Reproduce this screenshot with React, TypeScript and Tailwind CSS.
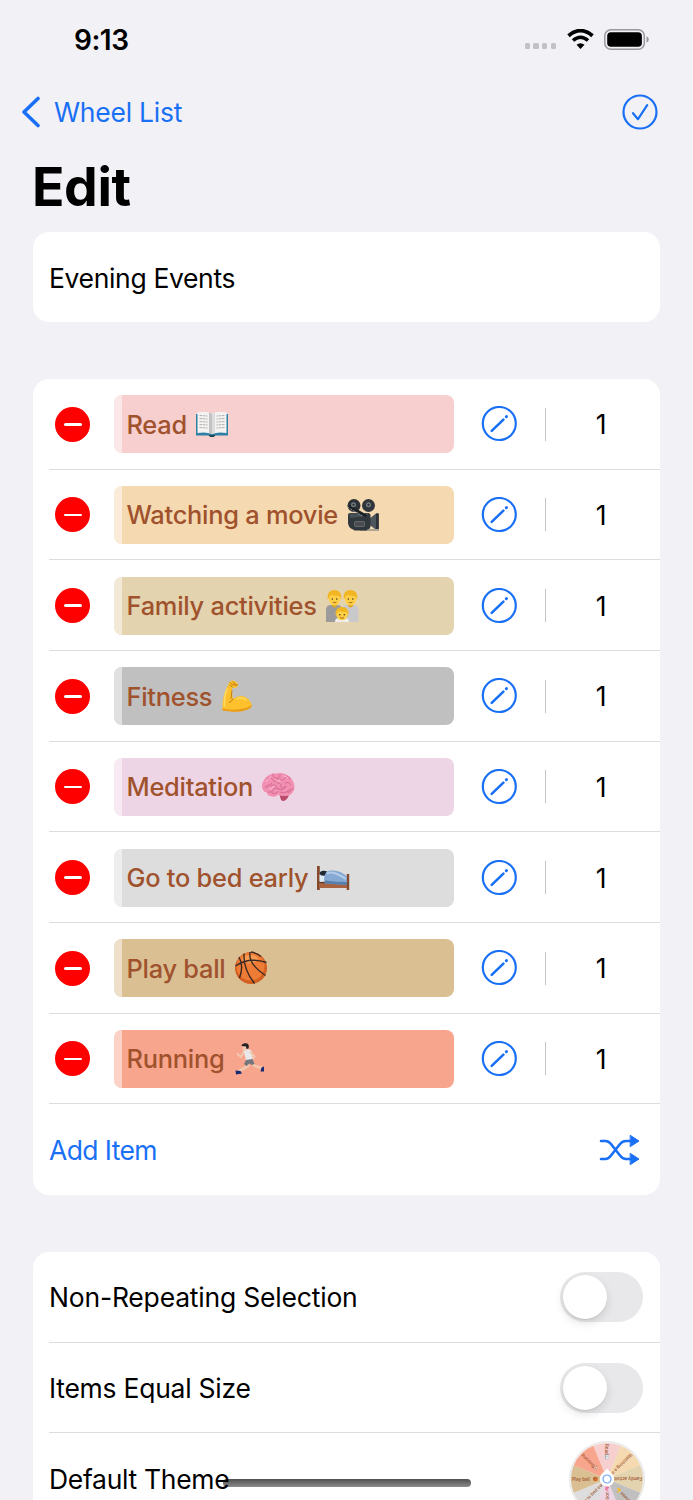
import type { ReactNode } from "react";

type IconProps = { className?: string; x?: number; y?: number; width?: number; height?: number };

function BookIcon(props: IconProps) {
  return (
    <svg viewBox="0 0 34 34" {...props}>
      <path d="M1 7h32v21.500H20l-1.500 1h-3l-1.500-1H1z" fill="#2f80a5" />
      <path d="M13.500 28h7l-1.500 2h-4z" fill="#1f4a52" />
      <path d="M2.500 5.500Q11 3.500 17 6.500Q23 3.500 31.500 5.500V26Q23 24.500 17 27Q11 24.500 2.500 26z" fill="#f4f3f1" />
      <path d="M14 5.500L17 6.500V27L14 25.700z" fill="#c3c2c3" />
      <path d="M20 5.500L17 6.500V27L20 25.700z" fill="#dddcdc" />
      <path d="M4.500 8.500l8 .5M4.500 11.500l8 .5M4.500 14.500l8 .5M4.500 17.500l8 .5M4.500 20.500l8 .5M29.500 8.500l-8 .5M29.500 11.500l-8 .5M29.500 14.500l-8 .5M29.500 17.500l-8 .5M29.500 20.500l-8 .5" stroke="#a9a9ac" strokeWidth=".9" strokeDasharray="2.500 .6" />
    </svg>
  );
}

function CameraIcon(props: IconProps) {
  return (
    <svg viewBox="0 0 34 34" {...props}>
      <path d="M23 21l7-5.500h2.500V31H29l-6-4.500z" fill="#4d565d" />
      <path d="M30 15.500h2.800V31H30z" fill="#2c3237" />
      <path d="M14 31.500h19v1H14z" fill="#6b6f72" />
      <path d="M2 17q0-2 2-2h18q2.500 0 2.500 2.500V28q0 3-3 3.500l-1 1H8.500L7 31.500Q2.500 30 2 25z" fill="#30373d" />
      <path d="M3 15.500L22 15v3L4 20z" fill="#464f56" />
      <circle cx="8" cy="7.500" r="6.500" fill="#2b3136" />
      <circle cx="22.500" cy="7.500" r="6.500" fill="#30363b" />
      <path d="M2 9l17 10 3-1.500L4 7z" fill="#1d2226" />
      <g fill="#71797e">
        <circle cx="7.500" cy="6.800" r="2.500" />
        <circle cx="22.500" cy="6.800" r="2.500" />
      </g>
      <circle cx="7.500" cy="6.800" r="1" fill="#22272b" />
      <circle cx="22.500" cy="6.800" r="1" fill="#22272b" />
      <path d="M2 9.500l14 8.500" stroke="#9aa1a5" strokeWidth="1" strokeDasharray="1.500 1.500" />
      <rect x="8.500" y="23.500" width="10" height="5" rx="1" fill="#4b4c50" stroke="#777b7e" strokeWidth=".7" />
    </svg>
  );
}

function FamilyIcon(props: IconProps) {
  return (
    <svg viewBox="0 0 34 34" {...props}>
      <path d="M1 33V21q0-5 5-5h6q5 0 5 5v12z" fill="#9b9b9b" />
      <path d="M17 33V21q0-5 5-5h6q5.500 0 5.500 5v12z" fill="#c9c8ca" />
      <path d="M7 13h5v4q-2.500 3-5 0zM23 13h5v4q-2.500 3-5 0z" fill="#e0a521" />
      <ellipse cx="9.500" cy="9.500" rx="5.800" ry="6.900" fill="#fdd046" />
      <ellipse cx="25.500" cy="9.500" rx="5.800" ry="6.900" fill="#fdd046" />
      <path d="M2.800 11Q1.500 1 9 1Q17.300 .5 16.200 11L14.300 7Q9 7.500 6.500 5.500Q4.500 7 2.800 11z" fill="#f2b524" />
      <path d="M18.800 11Q17.500 1 25 1Q33.300 .5 32.200 11L30.300 7Q25 7.500 22.500 5.500Q20.500 7 18.800 11z" fill="#f2b524" />
      <g fill="#4d3517">
        <circle cx="7.300" cy="10" r=".8" />
        <circle cx="11.800" cy="10" r=".8" />
        <circle cx="23.300" cy="10" r=".8" />
        <circle cx="27.800" cy="10" r=".8" />
      </g>
      <path d="M7.800 13.200q1.800 1.200 3.600 0M23.800 13.200q1.800 1.200 3.600 0" stroke="#9a5c14" strokeWidth=".9" fill="none" />
      <path d="M10 33q0-4 4-4h6q4 0 4 4z" fill="#efefef" />
      <ellipse cx="17" cy="25" rx="5.900" ry="6.300" fill="#fdd046" />
      <path d="M10.600 26.500Q9.500 18 17 18Q24.500 18 23.400 26.500L21.800 23Q16.500 23.500 14 21.800Q12 23.500 10.600 26.500z" fill="#f2b524" />
      <circle cx="14.800" cy="25.700" r=".8" fill="#4d3517" />
      <circle cx="19.300" cy="25.700" r=".8" fill="#4d3517" />
      <path d="M15 28.500q2 1.500 4 0" stroke="#9a5c14" strokeWidth=".9" fill="none" />
    </svg>
  );
}

function ArmIcon(props: IconProps) {
  return (
    <svg viewBox="0 0 34 34" {...props}>
      <path d="M9.500 3Q11 1 13.500 1.500L17.500 4Q18.500 7 16.500 8.500Q13.500 9.500 12.500 8L11.800 11.500L13 20Q20 15 26 18.500Q30.500 21.500 31.500 25.500Q32 29 27.500 30.500Q19 34 7 32L2.500 31.500Q1.500 19 7.500 7z" fill="#fcc12d" />
      <path d="M2.500 31.500L7 32Q19 34 27.500 30.500Q32 29 31.500 25.500Q29 29 21 30Q10 31.500 2.500 29.500z" fill="#e89b18" />
      <path d="M10 3.500Q12 7 17.500 6M12.500 8Q10.500 7.500 10 6M12.800 3l3.500 3M13 20Q11 23 9.500 23.500M12 11.500l-1 8" stroke="#b9730e" strokeWidth=".9" fill="none" strokeLinecap="round" />
      <path d="M7 10Q4 17 4.500 27M17 20q5-2.500 9 1" stroke="#ffda61" strokeWidth="1.600" fill="none" strokeLinecap="round" />
    </svg>
  );
}

function BrainIcon(props: IconProps) {
  return (
    <svg viewBox="0 0 34 34" {...props}>
      <path d="M18 23q7-1.500 10 1-.5 4-4 6.500-2 1-4-.5z" fill="#b94c6b" />
      <path d="M2 20Q-.5 15 3 10Q6 4 14 3.500Q24 1.500 30 8Q35 14 33 20Q31 25.500 25 26Q19 26 17.500 24.500Q14 28 9 26Q6 25.500 6 22.500Q3 22.500 2 20z" fill="#f190b2" />
      <path d="M4 17q3 1 3-2 3 1 4-2M6 9q4-3 6 1t5-1M12 4q-1 3 3 4t4-3M19 9q3 3 5-1t5 1M16 13q4-1 4 3t5 1M24 13q4-2 6 2M7 22q4 1 5-2t6-1 6-3M10 16q4-3 6 1M19 22q5 2 8-1t5-2M26 22q2 1 4-1M11 23q3 2 6-1" fill="none" stroke="#d56a8e" strokeWidth="1" strokeLinecap="round" />
      <path d="M5 12q2-4 5-5M15 10q2 2 4 1M23 6q3 0 4 2M9 19q3 0 4-3" fill="none" stroke="#ffbfd5" strokeWidth="1" strokeLinecap="round" />
    </svg>
  );
}

function BedIcon(props: IconProps) {
  return (
    <svg viewBox="0 0 34 34" {...props}>
      <rect x="1" y="5" width="2.800" height="24" fill="#85492b" />
      <rect x="30.700" y="13" width="2.500" height="16" fill="#85492b" />
      <path d="M3 22h28v5H3z" fill="#a86240" />
      <path d="M3 20l28 2v1.500L3 22z" fill="#5c3525" />
      <path d="M3.500 13.500l8-1v8l-8 .5z" fill="#dce8f3" />
      <ellipse cx="7.800" cy="12.200" rx="4" ry="2.500" fill="#1e2630" />
      <path d="M9 13.500Q10 9.500 15 9.500Q24 8.500 31 15.500V24l-22-1.500Q7 19 9 13.500z" fill="#85a9d2" />
      <path d="M11 12.500Q14 11 18 12T30 18" stroke="#b4cce8" strokeWidth="2" fill="none" />
      <path d="M9 22.500L31 24v-3q-10 0-22-1.500z" fill="#587eaa" />
    </svg>
  );
}

function BallIcon(props: IconProps) {
  return (
    <svg viewBox="0 0 34 34" {...props}>
      <circle cx="17" cy="17" r="16" fill="#d35f20" />
      <circle cx="16.500" cy="15.500" r="14" fill="#ee7c37" />
      <ellipse cx="16" cy="8" rx="8" ry="4" fill="#f79a54" />
      <path d="M1.500 15Q15 5.500 32.500 11.500M16 1Q14 13 31.500 24.500M17 1Q23 2 27 5.500M10 2.500Q9 18 20.500 32.500M5 6Q10 15 5.500 27" fill="none" stroke="#3c2a22" strokeWidth="1.400" />
    </svg>
  );
}

function RunnerIcon(props: IconProps) {
  return (
    <svg viewBox="0 0 34 34" {...props}>
      <path d="M17 19l-1 5-9 5M18 20l5 4 7 2" fill="none" stroke="#efc8ad" strokeWidth="2.600" strokeLinejoin="round" />
      <path d="M12 9l-3 6-4-3.500" fill="none" stroke="#efc8ad" strokeWidth="2" />
      <path d="M11.500 8q4-1.500 8 .5l1 9-6 2.500Q13 14 11.500 8z" fill="#e9e9ec" />
      <path d="M18 9.500l4.500 5-3 4" fill="none" stroke="#efc8ad" strokeWidth="2" />
      <path d="M14 18l6.500-1 2 5-3 1-2-1.500-3 2.500-2.500-2z" fill="#74777d" />
      <ellipse cx="13" cy="5.500" rx="2.700" ry="3.200" fill="#efc8ad" />
      <path d="M9.500 4Q10 1 14 1.300Q18 2 16.500 6.500L14.500 7L14 4.500z" fill="#262224" />
      <path d="M3.500 28.500l5 .5 1.500 2.500-6 1z" fill="#152c72" />
      <path d="M28.500 29.500l1-4 2.500-1v5z" fill="#152c72" />
    </svg>
  );
}

const items = [
  { name: "Read", Icon: BookIcon, bg: "bg-[#f7cfce]", fill: "#f7cfce" },
  { name: "Watching a movie", Icon: CameraIcon, bg: "bg-[#f4d9b1]", fill: "#f4d9b1" },
  { name: "Family activities", Icon: FamilyIcon, bg: "bg-[#e4d3af]", fill: "#e4d3af" },
  { name: "Fitness", Icon: ArmIcon, bg: "bg-[#c0c0c0]", fill: "#c0c0c0" },
  { name: "Meditation", Icon: BrainIcon, bg: "bg-[#eed5e6]", fill: "#eed5e6" },
  { name: "Go to bed early", Icon: BedIcon, bg: "bg-[#dddddd]", fill: "#dddddd" },
  { name: "Play ball", Icon: BallIcon, bg: "bg-[#dabf93]", fill: "#dabf93" },
  { name: "Running", Icon: RunnerIcon, bg: "bg-[#f8a58e]", fill: "#f8a58e" },
];

function StatusBar() {
  return (
    <div className="flex h-[78px] items-center justify-between pr-[44px] pl-[74px]">
      <span className="pt-[2px] text-[28px] font-semibold tracking-[-0.5px]">9:13</span>
      <div className="flex items-center">
        <div className="mt-[14px] mr-[11px] flex gap-[3.100px]">
          {[0, 1, 2, 3].map((dot) => <span key={dot} className="h-[5.500px] w-[5.500px] rounded-[1.500px] bg-[#c2c1c6]" />)}
        </div>
        <svg className="mr-[10px] h-[20px] w-[27px]" viewBox="0 0 27 20">
          <path d="M1.500 6.800Q13.500-3.500 25.500 6.800" fill="none" stroke="#000" strokeWidth="3.800" />
          <path d="M6 11.500Q13.500 5 21 11.500" fill="none" stroke="#000" strokeWidth="3.600" />
          <path d="M13.500 20l-4-4.200q4-3.200 8 0z" />
        </svg>
        <svg className="h-[21px] w-[45px]" viewBox="0 0 45 21">
          <rect x=".8" y=".8" width="39.500" height="19.400" rx="6" fill="none" stroke="#99989c" strokeWidth="1.500" />
          <rect x="3.200" y="3.200" width="34.700" height="14.600" rx="3.800" />
          <path d="M42.500 7.200q2.300 1 2.300 3.300t-2.300 3.300z" fill="#99989c" />
        </svg>
      </div>
    </div>
  );
}

function EditIcon() {
  return (
    <svg className="h-[36px] w-[36px]" viewBox="0 0 36 36" fill="none" stroke="#1a70f5" strokeLinecap="round">
      <circle cx="18.300" cy="17.500" r="16.500" strokeWidth="2.200" />
      <path d="M10.700 24.900L22.400 13.600" strokeWidth="2.600" />
      <path d="M25.300 10.700l.2-.2" strokeWidth="3" />
    </svg>
  );
}

function Card({ children, className }: { children: ReactNode; className: string }) {
  return <section className={`mx-[33px] overflow-hidden rounded-[16px] bg-white ${className}`}>{children}</section>;
}

function Row({ children, last }: { children: ReactNode; last?: boolean }) {
  return (
    <div className={`ml-[16px] flex h-[90.670px] items-center border-[#dddde0] pt-[1px] ${last ? "" : "border-b"}`}>
      {children}
    </div>
  );
}

function Toggle() {
  return (
    <span className="mr-[17px] ml-auto flex h-[50px] w-[83px] items-center rounded-full bg-[#e8e8ea] p-[3px]">
      <span className="h-[44px] w-[44px] rounded-full bg-white shadow-[0_4px_10px_rgba(0,0,0,0.12),0_1px_1px_rgba(0,0,0,0.08)]" />
    </span>
  );
}

function WheelPreview() {
  return (
    <svg className="mr-[14px] ml-auto h-[78px] w-[78px] overflow-visible" viewBox="-39 -39 78 78">
      <circle r="37.500" fill="#f1f0f0" stroke="#e9e8e8" />
      {items.map((item, i) => (
        <g key={item.name} transform={`rotate(${i * 45 - 90})`}>
          <path d="M0 0L33.260-13.780A36 36 0 0 1 33.260 13.780z" fill={item.fill} />
          <g transform="rotate(180)">
            <text x="-35" y="1.600" fontSize="4.500" letterSpacing="-0.030" fontWeight="500" fill="#a0522d">{item.name}</text>
            <item.Icon x={-33 + item.name.length * 2.1} y={-2.5} width={5} height={5} />
          </g>
        </g>
      ))}
      <path d="M-4-6L0-10.500L4-6z" fill="#fff" />
      <circle r="7.300" fill="#fff" />
      <circle r="4" fill="#fff" stroke="#6fa4f5" strokeWidth="1.200" />
    </svg>
  );
}

export default function App() {
  return (
    <div className="relative h-[1500px] w-[693px] overflow-hidden bg-[#f2f1f6] font-['Inter',sans-serif] text-[26.500px] tracking-[-0.25px] text-black">
      <StatusBar />
      <nav className="flex h-[68px] items-center justify-between pr-[35.500px] pl-[21px] text-[#1a70f5]">
        <div className="flex items-center">
          <svg className="mr-[13px] h-[32px] w-[20px]" viewBox="0 0 20 32" fill="none" stroke="#1a70f5" strokeWidth="3.600" strokeLinecap="round" strokeLinejoin="round">
            <path d="M17 2.500L3 16l14 13.500" />
          </svg>
          <span className="pt-[2px]">Wheel List</span>
        </div>
        <svg className="h-[36px] w-[36px]" viewBox="0 0 36 36" fill="none" stroke="#1a70f5" strokeWidth="2.200" strokeLinecap="round" strokeLinejoin="round">
          <circle cx="18" cy="18" r="16.500" />
          <path d="M11 19.200l5 6 9.200-14" />
        </svg>
      </nav>
      <h1 className="flex h-[86px] items-center pb-[4px] pl-[32px] text-[53.500px] font-bold tracking-[-0.4px]">Edit</h1>

      <Card className="flex h-[90px] items-center pt-[3px] pl-[16px] tracking-[-0.35px]">Evening Events</Card>

      <Card className="mt-[57px]">
        {items.map((item) => (
          <Row key={item.name}>
            <span className="ml-[6px] flex h-[35px] w-[35px] shrink-0 items-center justify-center rounded-full bg-[#fe0000]">
              <span className="h-[2.600px] w-[18px] rounded-full bg-white" />
            </span>
            <div className={`ml-[23.500px] flex h-[58px] w-[340.500px] shrink-0 items-center overflow-hidden rounded-[8px] ${item.bg}`}>
              <span className="h-full w-[8px] shrink-0 bg-white/50" />
              <span className="ml-[5px] pt-[1px] text-[25.400px] font-medium whitespace-nowrap text-[#a0522d]">{item.name}</span>
              <item.Icon className="ml-[8px] h-[34px] w-[34px] shrink-0" />
            </div>
            <div className="ml-[27px]"><EditIcon /></div>
            <span className="ml-[28px] h-[33px] w-px bg-[#c4c4c6]" />
            <span className="w-[110px] pt-[2px] text-center">1</span>
          </Row>
        ))}
        <Row last>
          <span className="pt-[1px] tracking-[-0.6px] text-[#1a70f5]">Add Item</span>
          <svg className="mr-[20px] ml-auto h-[32px] w-[41px]" viewBox="0 0 41 32" fill="none" stroke="#1a70f5" strokeWidth="2.600" strokeLinecap="round">
            <path d="M2 7h4.500q3 0 5.500 3l9 11.500q2.700 3.500 6 3.500h4M2 25h4.500q3 0 5.500-3.500l9-11.500q2.500-3 6-3h4" />
            <path d="M31.500 1.500L40 7l-8.500 5.500zM31.500 19.500L40 25l-8.500 5.500z" fill="#1a70f5" strokeWidth="1" strokeLinejoin="round" />
          </svg>
        </Row>
      </Card>

      <Card className="mt-[57px]">
        <Row><span className="pt-[2px] tracking-[-0.2px]">Non-Repeating Selection</span><Toggle /></Row>
        <Row><span className="pt-[2px]">Items Equal Size</span><Toggle /></Row>
        <Row last><span className="relative z-10 pt-[2px] tracking-[-0.3px]">Default Theme</span><WheelPreview /></Row>
      </Card>

      <div className="absolute top-[1479px] left-[223px] h-[8px] w-[248px] rounded-full bg-linear-to-b from-[#505050] to-[#8c8c8c]" />
    </div>
  );
}
